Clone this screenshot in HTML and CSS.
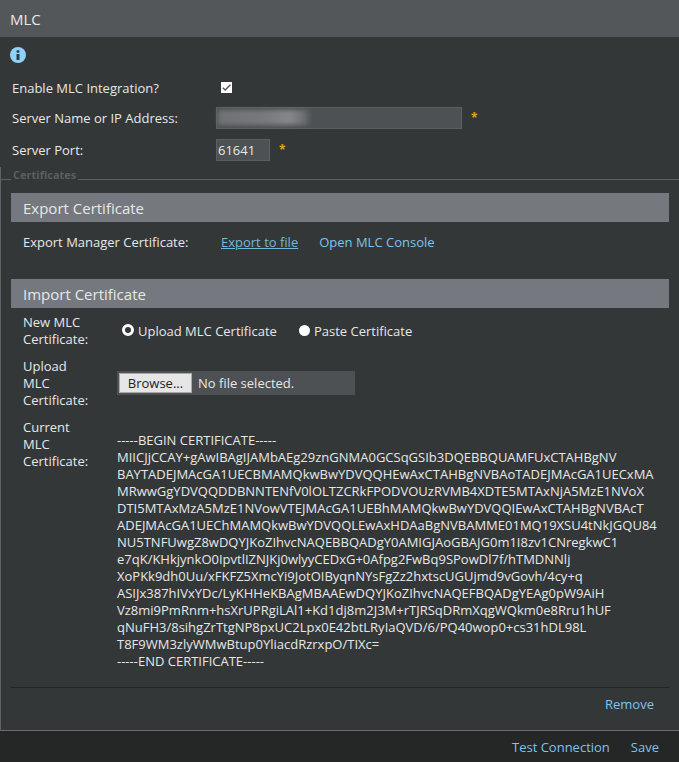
FILE: index.html
```html
<!DOCTYPE html>
<html lang="en">
<head>
<meta charset="utf-8">
<title>MLC</title>
<link rel="stylesheet" href="styles.css">
</head>
<body>
<div class="page">
  <header class="title">MLC</header>
  <div class="info-row">
    <svg class="info" viewBox="0 0 16 16" width="16" height="16"><circle cx="8" cy="8" r="8" fill="#8ed3f7"/><rect x="6.5" y="7" width="3" height="6" fill="#2c3a44"/><rect x="6.5" y="3.2" width="3" height="2.6" rx="1" fill="#2c3a44"/></svg>
  </div>
  <div class="form-row check-row">
    <label class="main-label">Enable MLC Integration?</label>
    <span class="check"><svg viewBox="0 0 11 11" width="11" height="11"><path d="M1.8 5.8 4.2 8 9.4 2.8" fill="none" stroke="#555" stroke-width="1.4"/></svg></span>
  </div>
  <div class="form-row server-row">
    <label class="main-label">Server Name or IP Address:</label>
    <div class="input wide"><span class="blur"></span></div>
    <span class="req">*</span>
  </div>
  <div class="form-row port-row">
    <label class="main-label">Server Port:</label>
    <div class="input port">61641</div>
    <span class="req">*</span>
  </div>
  <section class="fieldset">
    <div class="legend-line"><span class="legend">Certificates</span></div>
    <div class="fieldset-body">
      <h2 class="band">Export Certificate</h2>
      <div class="export-row">
        <span class="export-label">Export Manager Certificate:</span>
        <a class="link underline">Export to file</a>
        <a class="link">Open MLC Console</a>
      </div>
      <h2 class="band">Import Certificate</h2>
      <div class="grid-row new-row">
        <span class="side-label">New MLC Certificate:</span>
        <div class="radios">
          <span class="radio-item"><span class="radio on"></span>Upload MLC Certificate</span>
          <span class="radio-item"><span class="radio"></span>Paste Certificate</span>
        </div>
      </div>
      <div class="grid-row upload-row">
        <span class="side-label">Upload MLC Certificate:</span>
        <div class="file"><span class="browse">Browse...</span><span class="file-name">No file selected.</span></div>
      </div>
      <div class="grid-row current-row">
        <span class="side-label">Current MLC Certificate:</span>
        <pre class="cert">-----BEGIN CERTIFICATE-----
MIICJjCCAY+gAwIBAgIJAMbAEg29znGNMA0GCSqGSIb3DQEBBQUAMFUxCTAHBgNV
BAYTADEJMAcGA1UECBMAMQkwBwYDVQQHEwAxCTAHBgNVBAoTADEJMAcGA1UECxMA
MRwwGgYDVQQDDBNNTENfV0lOLTZCRkFPODVOUzRVMB4XDTE5MTAxNjA5MzE1NVoX
DTI5MTAxMzA5MzE1NVowVTEJMAcGA1UEBhMAMQkwBwYDVQQIEwAxCTAHBgNVBAcT
ADEJMAcGA1UEChMAMQkwBwYDVQQLEwAxHDAaBgNVBAMME01MQ19XSU4tNkJGQU84
NU5TNFUwgZ8wDQYJKoZIhvcNAQEBBQADgY0AMIGJAoGBAJG0m1I8zv1CNregkwC1
e7qK/KHkjynkO0IpvtlIZNJKj0wlyyCEDxG+0Afpg2FwBq9SPowDl7f/hTMDNNlj
XoPKk9dh0Uu/xFKFZ5XmcYi9JotOIByqnNYsFgZz2hxtscUGUjmd9vGovh/4cy+q
ASIJx387hIVxYDc/LyKHHeKBAgMBAAEwDQYJKoZIhvcNAQEFBQADgYEAg0pW9AiH
Vz8mi9PmRnm+hsXrUPRgiLAl1+Kd1dj8m2J3M+rTJRSqDRmXqgWQkm0e8Rru1hUF
qNuFH3/8sihgZrTtgNP8pxUC2Lpx0E42btLRyIaQVD/6/PQ40wop0+cs31hDL98L
T8F9WM3zlyWMwBtup0YliacdRzrxpO/TIXc=
-----END CERTIFICATE-----</pre>
      </div>
      <div class="remove-row"><a class="link">Remove</a></div>
    </div>
  </section>
  <footer class="footer">
    <a class="link">Test Connection</a>
    <a class="link">Save</a>
  </footer>
</div>
</body>
</html>
```

FILE: styles.css
```css
* { box-sizing: border-box; }
html, body { margin: 0; padding: 0; }
body {
  background: #343738;
  color: #e6e8e8;
  font-family: "Open Sans", "Liberation Sans", sans-serif;
  font-size: 13px;
  line-height: 17px;
  overflow: hidden;
}
.page { width: 679px; height: 762px; display: flex; flex-direction: column; }
.title {
  height: 37px;
  background: #54575a;
  color: #e8e8e8;
  font-size: 15px;
  line-height: 39px;
  padding-left: 10px;
}
.info-row { height: 36px; padding: 10px 0 0 10px; }
.info { display: block; }
.form-row { display: flex; align-items: center; padding-left: 12px; }
.main-label { width: 204px; flex: none; }
.check-row { height: 30px; }
.server-row { height: 30px; }
.port-row { height: 34px; }
.check {
  width: 11px; height: 11px; background: #fff; margin-left: 5px;
  display: block; position: relative; top: -1px;
}
.check svg { display: block; }
.input {
  height: 22px;
  background: #4e5153;
  border: 1px solid #5c5f61;
  color: #e6e8e8;
  padding-left: 1px;
  line-height: 20px;
}
.input.wide { width: 246px; padding: 2px 1px; }
.input.port { width: 54px; }
.blur {
  display: block; width: 92px; height: 15px; margin-left: 0;
  background: linear-gradient(90deg, #6f7275 0%, #77797c 50%, #85878a 78%, #6f7275 92%, #55585a 100%);
  filter: blur(2px);
}
.req { color: #d9a91f; margin-left: 9px; position: relative; top: -1px; font-weight: 700; font-size: 12px; }
.fieldset {
  flex: 1;
  display: flex;
  flex-direction: column;
  border-left: 1px solid #5f6263;
  border-bottom: 1px solid #6a6c6d;
}
.legend-line { height: 13px; flex: none; position: relative; border-bottom: 1px solid #5f6263; margin-left: -1px; }
.legend {
  position: absolute; left: 11px; top: 1px;
  background: #343738; padding: 0 2px;
  color: #5b5e60; font-size: 11px; line-height: 14px; font-weight: 700;
}
.fieldset-body { padding: 13px 10px 0 10px; }
.band {
  margin: 0;
  height: 29px;
  background: #75787e;
  color: #e6e8e8;
  font-size: 15px;
  font-weight: 400;
  line-height: 31px;
  padding-left: 12px;
}
.export-row { height: 57px; padding: 12px 0 0 12px; display: flex; align-items: flex-start; }
.export-label { width: 198px; flex: none; }
.link { color: #7cc4ec; }
.link.underline { color: #73b8d6; text-decoration: underline; margin-right: 21px; }
.grid-row { display: grid; grid-template-columns: 94px 1fr; padding-left: 12px; }
.new-row { height: 50px; padding-top: 6px; }
.upload-row { height: 61px; }
.current-row { height: 268px; }
.side-label { display: block; max-width: 70px; }
.radios { display: flex; align-items: center; height: 34px; padding-left: 5px; }
.radio-item { display: inline-flex; align-items: center; margin-right: 22px; }
.radio {
  width: 11px; height: 11px; border-radius: 50%; background: #fff; margin-right: 4px; position: relative; top: -1px;
}
.radio.on { background: #343738; border: 3px solid #fff; width: 12px; height: 12px; }
.file {
  width: 238px; height: 24px; background: #4e5153; display: flex; align-items: center; padding-left: 2px; margin-top: 13px;
}
.browse {
  width: 73px; height: 20px; background: #e6e6e6; border: 1px solid #aaa; color: #222;
  text-align: center; line-height: 18px;
}
.file-name { margin-left: 6px; }
.cert {
  margin: 13px 0 0;
  font-family: inherit;
  font-size: 13px;
  line-height: 17px;
  white-space: pre;
}
.remove-row {
  border-top: 1px solid #222425;
  height: 43px;
  padding: 8px 15px 0 0;
  text-align: right;
}
.footer {
  height: 31px;
  background: #252626;
  display: flex;
  justify-content: flex-end;
  gap: 21px;
  align-items: center;
  padding: 1px 20px 0 0;
  flex: none;
}
```
